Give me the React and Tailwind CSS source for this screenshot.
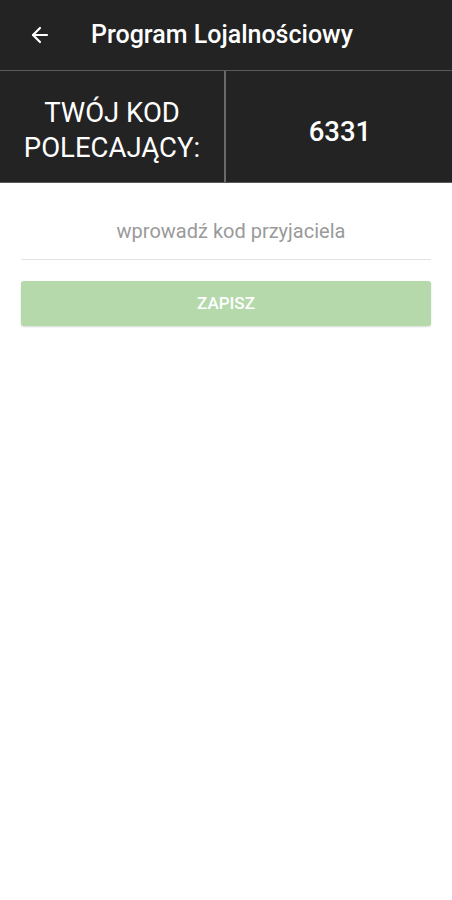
import { ArrowLeft } from 'lucide-react';

export default function App() {
  return (
    <div className="w-[452px] h-[900px] bg-white font-['Roboto',sans-serif]">
      <header className="h-[71px] bg-[#232323] flex items-center border-b border-[#5a5a5a]">
        <div className="w-[80px] flex justify-center">
          <ArrowLeft className="w-6 h-6 text-white" strokeWidth={2.2} />
        </div>
        <h1 className="text-white text-[25px] font-medium ml-[11px]">Program Lojalnościowy</h1>
      </header>

      <div className="h-[112px] bg-[#232323] flex border-b border-[#5a5a5a]">
        <div className="w-[226px] border-r-2 border-[#6a6a6a] flex items-center justify-center">
          <p className="text-white text-[27.5px] leading-[35px] text-center pt-[7px]">
            TWÓJ KOD
            <br />
            POLECAJĄCY:
          </p>
        </div>
        <div className="flex-1 flex items-center justify-center pt-[10px] pl-[2px]">
          <span className="text-white text-[27.5px] font-medium">6331</span>
        </div>
      </div>

      <div className="px-[21px]">
        <div className="h-[77px] border-b border-[#e2e2e2] flex items-center justify-center pt-[19px] pl-[10px]">
          <span className="text-[#9a9a9a] text-[20px]">wprowadź kod przyjaciela</span>
        </div>
        <button className="mt-[21px] w-full h-[45px] rounded-[3px] bg-[#b5d9ab] text-white text-[17px] font-medium shadow-[0_1px_2px_rgba(0,0,0,0.15)]">
          ZAPISZ
        </button>
      </div>
    </div>
  );
}
